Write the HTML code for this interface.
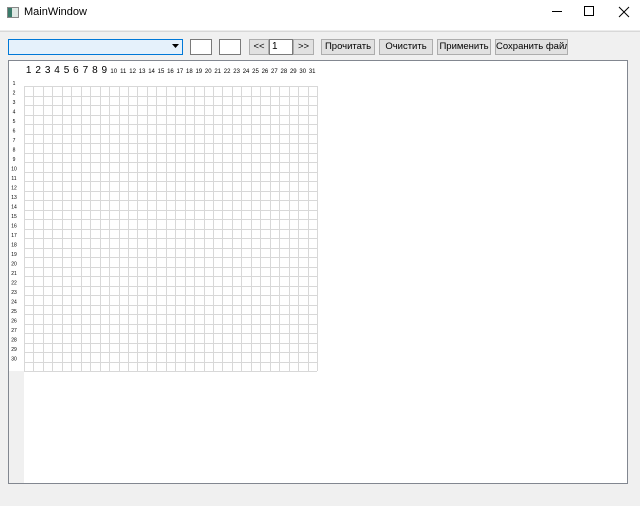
<!DOCTYPE html>
<html><head><meta charset="utf-8"><style>
*{margin:0;padding:0;box-sizing:border-box}
body{width:640px;height:506px;background:#f0f0f0;font-family:"Liberation Sans",sans-serif;font-size:11px;position:relative;overflow:hidden}
.a{position:absolute}
.title{left:0;top:0;width:640px;height:30px;background:#fff}
.btn{position:absolute;top:39px;height:16px;background:#e1e1e1;border:1px solid #adadad;font-size:9.5px;text-align:center;line-height:14px;color:#000;white-space:nowrap;overflow:hidden}
.box{position:absolute;top:39px;height:16px;background:#fff;border:1px solid #7a7a7a}
</style></head><body>
<div class="a title"></div>
<div class="a" style="left:7px;top:7px;width:12px;height:11px;border:1px solid #888;background:#dfe8e4"><div style="width:4px;height:9px;background:#3a7b6a"></div></div>
<div class="a" style="left:24px;top:6px;font-size:11px;color:#000">MainWindow</div>
<div class="a" style="left:552px;top:11px;width:10px;height:1px;background:#000"></div>
<div class="a" style="left:584px;top:6px;width:10px;height:10px;border:1px solid #000"></div>
<svg class="a" style="left:618px;top:6px" width="12" height="12"><path d="M1 1L11 11M11 1L1 11" stroke="#000" stroke-width="1"/></svg>
<div class="a" style="left:0;top:30px;width:640px;height:2px;background:#ececec"></div>
<div class="a" style="left:0;top:31px;width:640px;height:1px;background:#d8d8d8"></div>
<div class="box" style="left:8px;width:175px;background:#e5f1fb;border-color:#0078d7"></div>
<svg class="a" style="left:172px;top:44px" width="8" height="5"><path d="M0 0H7L3.5 4Z" fill="#000"/></svg>
<div class="box" style="left:190px;width:22px"></div>
<div class="box" style="left:219px;width:22px"></div>
<div class="btn" style="left:249px;width:20px">&lt;&lt;</div>
<div class="box" style="left:269px;width:24px;font-size:10px;line-height:14px;padding-left:2px">1</div>
<div class="btn" style="left:293px;width:21px">&gt;&gt;</div>
<div class="btn" style="left:321px;width:54px">Прочитать</div>
<div class="btn" style="left:379px;width:54px">Очистить</div>
<div class="btn" style="left:437px;width:54px">Применить</div>
<div class="btn" style="left:495px;width:73px">Сохранить файл</div>
<div class="a" style="left:8px;top:60px;width:620px;height:424px;background:#fff;border:1px solid #828790"></div>
<div class="a" style="left:9px;top:61px;width:15px;height:422px;background:#f0f0f0"></div>
<div class="a" style="left:9px;top:61px;width:15px;height:310px;background:#fff"></div>
<svg class="a" style="left:0;top:0" width="640" height="506">
<g stroke="#d8d8d8" stroke-width="1">
<path id="g" d=""/>
</g>
<g id="t" font-family="Liberation Sans" font-size="10" fill="#000"></g>
</svg>
<script>
var d="",t="";
for(var i=0;i<=31;i++){var x=Math.round(24+i*9.45)+.5;d+="M"+x+" 86V371";}
for(var j=0;j<=30;j++){var y=Math.round(86+j*9.5)+.5;d+="M24 "+y+"H317";}
document.getElementById("g").setAttribute("d",d);
for(var i=0;i<31;i++){var x=24+i*9.45+4.7;t+='<text x="'+x+'" y="73" text-anchor="middle" font-size="'+(i<9?10:6)+'">'+(i+1)+'</text>';}
for(var j=0;j<30;j++){var y=86+j*9.5-1;t+='<text x="14" y="'+y+'" text-anchor="middle" font-size="5">'+(j+1)+'</text>';}
document.getElementById("t").innerHTML=t;
</script>
</body></html>
